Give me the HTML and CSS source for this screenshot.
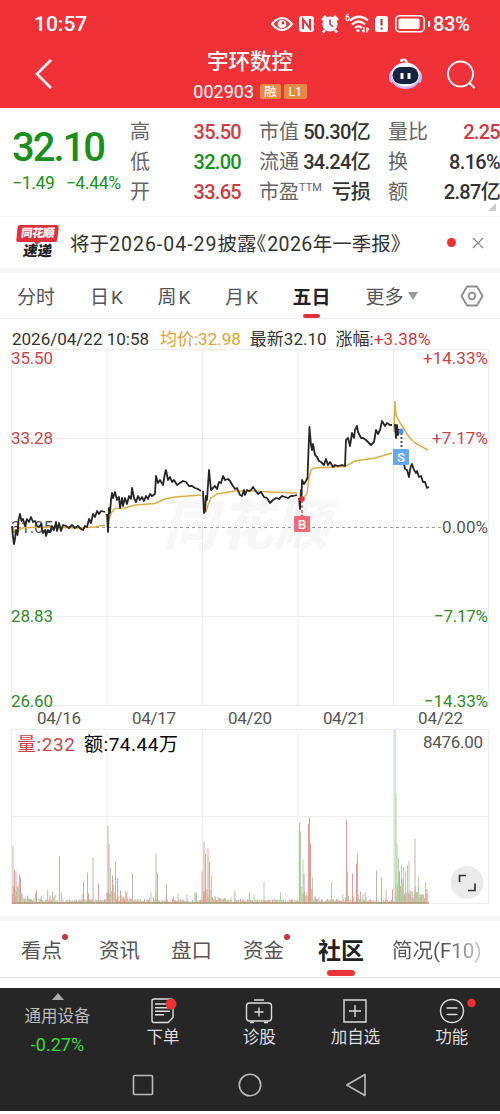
FILE: index.html
```
<!DOCTYPE html>
<html lang="zh-CN">
<head>
  <meta charset="UTF-8">
  <meta name="viewport" content="width=device-width, initial-scale=1.0">
  <title>宇环数控 002903</title>
  <link rel="stylesheet" href="styles.css">
</head>
<body>
  <header class="header">
    <div class="status">
      <span class="time">10:57</span>
      <svg class="status-icons" width="154" height="24" viewBox="0 0 154 24">
        <!-- eye -->
        <path d="M1 12Q11 0 21 12Q11 24 1 12Z" fill="none" stroke="#fff" stroke-width="2"/>
        <circle cx="11" cy="12" r="4.3" fill="#fff"/><circle cx="12" cy="11" r="1.4" fill="#a33"/>
        <!-- nfc -->
        <rect x="28" y="4" width="15" height="16" rx="3" fill="#fff"/>
        <path d="M32 17V7.5L39 16.5V7" fill="none" stroke="#ef3137" stroke-width="2"/>
        <!-- alarm -->
        <circle cx="59" cy="12" r="7.6" fill="#fff"/>
        <path d="M51 8l4-4M67 8l-4-4M54 18l-2 2.500M64 18l2 2.500" stroke="#fff" stroke-width="2.500"/>
        <path d="M59 7.500V12l3 3" fill="none" stroke="#ef3137" stroke-width="1.600"/>
        <!-- wifi -->
        <text x="74" y="9" class="wifi-gen">6</text>
        <path d="M79 8.500Q88 1 97 8.500M81 12.500Q87.500 6.500 94 12.500M84 16Q87.500 12.500 91 16" fill="none" stroke="#fff" stroke-width="2.200"/>
        <circle cx="87" cy="18.500" r="1.600" fill="#fff"/>
        <path d="M93 15v5M91 18l2 2.500M96 20.500v-5M98 18l-2-2.500" fill="none" stroke="#fff" stroke-width="1.300"/>
        <!-- sim -->
        <path d="M106 4h9a2 2 0 0 1 2 2v12a2 2 0 0 1-2 2h-9a2 2 0 0 1-2-2V7z" fill="#fff"/>
        <path d="M110.500 7v6.500M110.500 15.500v2" stroke="#a33" stroke-width="2"/>
        <!-- battery -->
        <rect x="124.800" y="3.800" width="28.400" height="16" rx="4" fill="none" stroke="#fff" stroke-width="1.500"/>
        <rect x="127.500" y="6.500" width="21" height="10.500" rx="1.500" fill="#fff"/>
      </svg>
      <span class="battery-tip"></span>
      <span class="battery">83%</span>
    </div>
    <div class="title-bar">
      <svg class="back" width="20" height="32" viewBox="0 0 20 32"><path d="M18 2L4 16L18 30" fill="none" stroke="#fff" stroke-width="2.500"/></svg>
      <div class="title">
        <h1>宇环数控</h1>
        <div class="code"><span>002903</span><i>融</i><i>L1</i></div>
      </div>
      <svg class="robot" width="36" height="34" viewBox="0 0 36 34">
        <path d="M13 3Q18 1 19 6" fill="none" stroke="#fff" stroke-width="2"/><circle cx="13.500" cy="3.500" r="1.500" fill="#fff"/>
        <ellipse cx="3.500" cy="20" rx="2.500" ry="6" fill="#c9b5f2"/><ellipse cx="31.500" cy="20" rx="2.500" ry="6" fill="#c9b5f2"/>
        <ellipse cx="17.500" cy="19" rx="15" ry="13" fill="#cbb9f7"/>
        <ellipse cx="17.500" cy="17.500" rx="14" ry="12" fill="#f6f4ff"/>
        <rect x="4.500" y="10" width="26" height="17" rx="8.500" fill="#16233f"/>
        <path d="M14 16v6M21 16v6" stroke="#fff" stroke-width="3"/>
      </svg>
      <svg class="search" width="30" height="30" viewBox="0 0 30 30"><circle cx="13.500" cy="14" r="12.500" fill="none" stroke="#fff" stroke-width="1.800"/><path d="M22 22.500L27.500 28" stroke="#fff" stroke-width="2"/></svg>
    </div>
  </header>

  <section class="quote">
    <div class="price green">
      <strong>32.10</strong>
      <div><span>−1.49</span><span>−4.44%</span></div>
    </div>
    <dl class="stats">
      <dt>高</dt><dd class="red">35.50</dd>
      <dt>市值</dt><dd>50.30亿</dd>
      <dt>量比</dt><dd class="red">2.25</dd>
      <dt>低</dt><dd class="green">32.00</dd>
      <dt>流通</dt><dd>34.24亿</dd>
      <dt>换</dt><dd>8.16%</dd>
      <dt>开</dt><dd class="red">33.65</dd>
      <dt>市盈<sup>TTM</sup></dt><dd>亏损</dd>
      <dt>额</dt><dd>2.87亿</dd>
    </dl>
    <span class="corner"></span>
  </section>

  <section class="news">
    <div class="news-logo"><b>同花顺</b><em>速递</em></div>
    <p>将于<span class="date">2026-04-29</span>披露<span class="half">《</span><span class="year">2026</span>年一季报<span class="half">》</span></p>
    <span class="news-dot"></span>
    <svg width="12" height="12" viewBox="0 0 12 12"><path d="M1 1l10 10M11 1L1 11" stroke="#888" stroke-width="1.300"/></svg>
  </section>

  <nav class="periods">
    <a>分时</a><a>日<s>K</s></a><a>周<s>K</s></a><a>月<s>K</s></a><a class="active">五日</a><a>更多<small></small></a>
    <svg width="24" height="22" viewBox="0 0 24 22"><path d="M7 1.500h10L22.500 11L17 20.500H7L1.500 11z" fill="none" stroke="#8a8a8a" stroke-width="1.800" stroke-linejoin="round"/><circle cx="12" cy="11" r="3.300" fill="none" stroke="#8a8a8a" stroke-width="1.800"/></svg>
  </nav>

  <section class="charts">
    <div class="info"><span class="info-time">2026/04/22 10:58</span><span class="gold">均价:32.98</span><span>最新32.10</span><span>涨幅:<b class="red">+3.38%</b></span></div>
    <svg class="chart" width="500" height="568" viewBox="0 348 500 568">
      <text class="watermark" x="163" y="545" textLength="166">同花顺</text>
      <path class="grid" d="M11.500 349.500H488.500V705.500H11.500ZM11.500 438.500H488.500M11.500 616.500H488.500M107 349V705M202.500 349V705M298 349V705M393.500 349V705"/>
      <path class="grid" d="M11.500 729.500H488.500V903.500H11.500ZM11.500 816.500H488.500M107 729V903M202.500 729V903M298 729V903M393.500 729V903"/>
      <path class="zero" d="M12 527.500H441"/>
      <g class="axis">
        <text class="up" x="11" y="364" textLength="42">35.50</text>
        <text class="up" x="11" y="443.500" textLength="42">33.28</text>
        <text x="11" y="533" textLength="42">31.05</text>
        <text class="down" x="11" y="622" textLength="42">28.83</text>
        <text class="down" x="11" y="707" textLength="42">26.60</text>
        <text class="up" x="423" y="364" textLength="65">+14.33%</text>
        <text class="up" x="432" y="443.500" textLength="56">+7.17%</text>
        <text x="442" y="533" textLength="46">0.00%</text>
        <text class="down" x="434" y="622" textLength="54">−7.17%</text>
        <text class="down" x="424" y="707" textLength="64">−14.33%</text>
        <text x="37" y="724" textLength="44">04/16</text>
        <text x="132" y="724" textLength="44">04/17</text>
        <text x="228" y="724" textLength="44">04/20</text>
        <text x="323" y="724" textLength="43">04/21</text>
        <text x="418" y="724" textLength="45">04/22</text>
        <text x="423" y="748" textLength="60">8476.00</text>
      </g>
      <text class="vol-text up" x="17" y="751" textLength="58">量:232</text>
      <text class="vol-text" x="84" y="751" textLength="94">额:74.44万</text>

      <path class="avg" d="M12 527L15 532L22 528L40 527L80 528L95 527L105 525M108 522L112 512L115 508.500L125 508L135 505L155 503.500L165 499L175 497L201 495M203 495L206 512L208 505L211 498L217 494L235 491L250 491L270 492L297 493M302 499L307 494L309 478L311 470L314 468L345 466.500L355 461L375 458L392 453M394 432L395 401L396 415L399 421L404 429L409 437L415 443L428 450"/>
      <path class="line" d="M12 526L13 537L14 544L15 539L16 530L17.500 535L18.500 520L20 514L21.500 521L23 519L25 526L27 519L29 522L31 517L33 522L35 521L37 526L39 527L41 524L43 533L45 530L46 536L48 530L50 532L52 526L54 530L56 522L57 531L59 523L61 531L63 525L66 526L69 528L72 525L75 528L78 526L81 529L83 530L85 526L87 527L89 519L91 523L93 514L95 517L97 511L99 514L101 511L105 512"/>
      <path class="line" d="M107 514L108 532L109 508L110 513L111 500L112 493L113 498L115 492L117 500L119 497L120 508L122 498L123 506L125 498L127 504L129 496L131 499L132 488L134 498L136 502L138 496L140 500L142 497L144 501L146 496L148 499L150 494L152 496L155 494L156 476L158 483L160 480L163 485L165 473L166 470L168 480L170 477L172 482L174 480L177 485L180 483L183 481L186 482L189 486L192 486L195 488L198 489L201 491"/>
      <path class="line" d="M203 491L203.500 502L204 513L205 511L206 496L207 500L209 470L211 490L213 488L215 486L217 489L219 482L221 483L223 476L225 480L228 479L230 481L233 486L235 489L237 488L240 495L242 496L244 490L245 495L247 490L249 491L251 490L253 487L255 490L258 494L261 492L264 497L267 498L270 503L273 500L276 498L279 499L282 496L285 497L288 498L291 496L293 496L297 495"/>
      <path class="line" d="M299 498L300 509L301 490L301.500 497L302 480L304 484L306 481L307.500 478L308.500 450L309.500 427L311 445L312 450L313 444L315 455L317 457L319 461L321 462L324 465L326 459L328 465L330 462L333 467L335 465L338 466L342 465L345 466L346 440L348 438L350 446L352 433L354 438L355 430L357 426L358 432L361 438L363 438L366 440L369 443L371 445L374 442L376 430L378 434L380 430L382 421L385 426L387 423L390 425L392 425"/>
      <path class="line" d="M395 424L396 438L397 425L398 435L399 430L400 433M404 464L405 469L407 470L409 477L410 470L411 466L412 464L414 470L416 473L417 471L419 477L421 476L423 482L425 482L427 488L429 487"/>

      <path d="M401.500 433V449" stroke="#3d4f7c" stroke-width="2" stroke-dasharray="2 2"/>
      <circle cx="401" cy="431" r="2.600" fill="#4c94ef"/>
      <path d="M302 500V514" stroke="#e05058" stroke-width="1.500" stroke-dasharray="3 2"/>
      <circle cx="302" cy="499" r="2.800" fill="#f02c36"/>
      <rect x="393" y="449" width="16" height="16" rx="1" fill="#69a7f4"/>
      <text class="mark" x="401" y="462">S</text>
      <path d="M300 516l2-2 2 2z" fill="#f4606e"/>
      <rect x="294" y="516" width="16" height="16" rx="1" fill="#f4697a"/>
      <text class="mark" x="302" y="529">B</text>

      <g id="volume"></g>
      <circle cx="467" cy="882.500" r="16.500" fill="#ebebeb"/>
      <path d="M459.500 882V875.500H466M475 883.500V890.500H468" fill="none" stroke="#333" stroke-width="1.700"/>
    </svg>
  </section>

  <nav class="tabs">
    <a class="dot">看点</a><a>资讯</a><a>盘口</a><a class="dot">资金</a><a class="active">社区</a><a class="fade">简况(F10)</a>
  </nav>

  <footer class="bottom">
    <div class="actions">
      <div class="sector"><small></small><span>通用设备</span><b>-0.27%</b></div>
      <div class="action">
        <svg width="28" height="28" viewBox="0 0 28 28"><path d="M5 2H22a2 2 0 0 1 2 2V20.500L19 25.500H5a2 2 0 0 1-2-2V4a2 2 0 0 1 2-2Z" fill="none" stroke="#ddd" stroke-width="1.400"/><path d="M6 7H17M6 10.700H21M6 14.200H21M6 17.700H15" stroke="#ddd" stroke-width="1.400"/><circle cx="22" cy="7" r="5.500" fill="#f02f33"/></svg>
        <span>下单</span>
      </div>
      <div class="action">
        <svg width="28" height="28" viewBox="0 0 28 28"><rect x="1.500" y="6" width="25" height="18" rx="3" fill="none" stroke="#ddd" stroke-width="1.400"/><path d="M9 3H19M5 25.500H9M19 25.500H23M14 10.500V19.500M9.500 15H18.500" stroke="#ddd" stroke-width="1.400"/></svg>
        <span>诊股</span>
      </div>
      <div class="action">
        <svg width="28" height="28" viewBox="0 0 28 28"><path d="M3 3H25V25H3ZM14 8V20M8 14H20" fill="none" stroke="#ddd" stroke-width="1.400"/></svg>
        <span>加自选</span>
      </div>
      <div class="action">
        <svg width="50" height="28" viewBox="0 0 50 28"><circle cx="25" cy="14" r="11.500" fill="none" stroke="#ddd" stroke-width="1.400"/><path d="M19.500 11H30.500M19.500 17.500H30.500" stroke="#ddd" stroke-width="1.400"/><circle cx="44.500" cy="6" r="4.200" fill="#f02f33"/></svg>
        <span>功能</span>
      </div>
    </div>
    <div class="system">
      <svg width="22" height="22" viewBox="0 0 22 22"><rect x="1.500" y="1.500" width="19" height="19" rx="1" fill="none" stroke="#bbb" stroke-width="1.600"/></svg>
      <svg width="24" height="24" viewBox="0 0 24 24"><circle cx="12" cy="12" r="10.700" fill="none" stroke="#bbb" stroke-width="1.600"/></svg>
      <svg width="22" height="24" viewBox="0 0 22 24"><path d="M19 1.500V22.500L0.800 12Z" fill="none" stroke="#bbb" stroke-width="1.600" stroke-linejoin="round"/></svg>
    </div>
  </footer>

  <script>
    // x, height of the tall volume bars, colour: r = up, g = down, n = flat
    const peaks = [
      [12.5, 58, 'n'], [14, 34, 'r'], [15.5, 32, 'r'], [19, 29, 'n'], [20, 26, 'r'], [59, 47, 'n'], [87, 31, 'n'], [92.5, 46, 'n'], [98, 20, 'r'], [83, 22, 'r'],
      [107.5, 78, 'n'], [108.5, 60, 'n'], [110, 36, 'g'], [112, 28, 'r'], [115, 42, 'n'], [117, 25, 'r'], [132, 30, 'n'], [155.5, 50, 'n'], [157, 30, 'r'], [166, 20, 'n'],
      [201.5, 32, 'r'], [203.5, 62, 'r'], [205, 50, 'r'], [207.5, 55, 'r'], [209, 42, 'r'], [211, 28, 'g'], [263.5, 22, 'g'],
      [299, 81, 'n'], [300, 72, 'g'], [302.5, 44, 'g'], [303.5, 30, 'r'], [308, 80, 'r'], [309, 86, 'r'], [310, 60, 'r'], [312, 26, 'g'], [331, 22, 'g'],
      [346, 84, 'r'], [347, 32, 'g'], [352, 30, 'r'], [356, 40, 'r'], [357, 50, 'n'], [376, 33, 'n'], [381, 26, 'r'],
      [394.5, 174, 'g'], [395.5, 110, 'g'], [396.5, 60, 'g'], [398, 46, 'g'], [399, 32, 'r'], [401, 38, 'g'], [403, 36, 'g'], [405, 32, 'g'], [407, 38, 'g'], [408.5, 43, 'g'], [414.5, 65, 'n'], [418, 26, 'g'], [425, 22, 'g']
    ];
    const colors = { r: '#dd8f87', g: '#a6cb95', n: '#b9a795' };
    const starts = [12, 107, 203, 299, 395];

    let seed = 7;
    function random() {
      seed = (seed * 16807) % 2147483647;
      return seed / 2147483647;
    }

    function bar(x, h, color) {
      return `<rect x="${x.toFixed(1)}" y="${(903.5 - h).toFixed(1)}" width="1" height="${h.toFixed(1)}" fill="${color}"/>`;
    }

    let bars = '';
    for (let x = 12; x < 428; x += 0.8) {
      const day = starts.filter(s => s <= x).pop();
      const base = 3 + 13 * Math.exp(-(x - day) / 9) + (day === 395 ? 5 : 0);
      const h = base * (0.4 + random()) + (random() > 0.87 ? random() * 10 : 0);
      const kind = random();
      bars += bar(x, h, kind < 0.36 ? colors.r : kind < 0.76 ? colors.g : colors.n);
    }
    for (const [x, h, c] of peaks) {
      bars += bar(x, h, colors[c]);
    }
    document.getElementById('volume').innerHTML = bars + '<path d="M12 903H429" stroke="#a58f6c" stroke-width="1.500"/>';
  </script>
</body>
</html>
```
FILE: styles.css
```
* {
  box-sizing: border-box;
}
body {
  margin: 0;
  width: 500px;
  height: 1114px;
  overflow: hidden;
  font-family: Roboto, "Noto Sans CJK SC", sans-serif;
  background: #fff;
  color: #333;
}
h1, p, dl, dd {
  margin: 0;
}
i, em {
  font-style: normal;
}
svg {
  display: block;
  flex: none;
}
.red {
  color: #d03a42;
}
.green {
  color: #18901c;
}
.gold {
  color: #dca437;
}

/* header */
.header {
  height: 108px;
  background: #f03137;
  color: #fff;
}
.status {
  display: flex;
  align-items: center;
  height: 48px;
  padding-left: 34px;
  font-size: 21px;
  font-weight: 500;
}
.time {
  width: 237px;
}
.battery-tip {
  width: 2px;
  height: 6px;
  margin: 0 3px 0 3px;
  background: #fff;
}
.battery {
  font-size: 20px;
  letter-spacing: -0.3px;
}
.wifi-gen {
  font-size: 9px;
  fill: #fff;
}
.title-bar {
  display: flex;
  height: 60px;
}
.back {
  margin: 10px 0 0 33px;
}
.title {
  width: 194px;
  margin-left: 100px;
  text-align: center;
}
.title h1 {
  padding-top: 1px;
  font-size: 21.5px;
  font-weight: 500;
  line-height: 26px;
}
.code {
  display: flex;
  justify-content: center;
  align-items: center;
  height: 20px;
  margin-top: 6px;
  font-size: 18px;
}
.code span {
  margin-right: 6px;
}
.code i {
  height: 15px;
  margin-right: 3px;
  padding: 0 4px;
  border-radius: 2px;
  background: #e58a45;
  font-size: 12.5px;
  line-height: 15px;
}
.code i:last-child {
  margin-right: 0;
  padding: 0 5px;
  letter-spacing: -0.3px;
}
.robot {
  margin: 9px 0 0 41px;
}
.search {
  margin: 12px 0 0 23px;
}

/* quote */
.quote {
  position: relative;
  display: flex;
  height: 109px;
  border-bottom: 1px solid #f3f3f3;
}
.price {
  width: 130px;
  padding: 16px 0 0 12px;
}
.price strong {
  display: block;
  font-size: 40px;
  font-weight: 500;
  line-height: 48px;
  letter-spacing: -2px;
}
.price div {
  display: flex;
  gap: 11px;
  font-size: 17.5px;
  line-height: 23px;
  letter-spacing: -0.3px;
}
.stats {
  display: grid;
  grid-template-columns: 39px 72px 63px 66px 58px 72px;
  grid-template-rows: repeat(3, 30px);
  padding-top: 9px;
  font-size: 20px;
  line-height: 30px;
}
.stats dt {
  white-space: nowrap;
  color: #666;
}
.stats dt:nth-of-type(3n+2),
.stats dt:nth-of-type(3n) {
  padding-left: 18px;
}
.stats dd {
  display: flex;
  justify-content: flex-end;
  white-space: nowrap;
  font-weight: 500;
  letter-spacing: -0.7px;
}
.stats sup {
  font-size: 11px;
  line-height: 0;
}
.corner {
  position: absolute;
  right: 4px;
  bottom: 5px;
  border-left: 8px solid transparent;
  border-bottom: 8px solid #ccc;
}

/* news */
.news {
  display: flex;
  align-items: center;
  height: 56px;
  padding: 0 16px 0 17px;
  border-bottom: 5px solid #f5f5f5;
}
.news-logo {
  width: 41px;
  height: 36px;
  margin-right: 12px;
  text-align: center;
}
.news-logo b {
  position: relative;
  display: block;
  height: 17px;
  border-radius: 2px;
  background: #e12f3b;
  color: #fff;
  font-size: 11.5px;
  font-weight: 900;
  line-height: 16px;
  letter-spacing: -0.5px;
  transform: skewX(-6deg);
}
.news-logo b::after {
  content: "";
  position: absolute;
  left: 18px;
  top: 17px;
  border: 3px solid transparent;
  border-top-color: #e12f3b;
  border-bottom: 0;
}
.news-logo em {
  display: block;
  color: #222;
  font-size: 14.5px;
  font-weight: 900;
  line-height: 20px;
  transform: skewX(-8deg);
}
.news p {
  width: 377px;
  white-space: nowrap;
  font-size: 19.5px;
}
.news .date {
  letter-spacing: 1px;
}
.news .year {
  margin-left: 1px;
  letter-spacing: 0.4px;
}
.half {
  font-feature-settings: "halt";
}
.news-dot {
  width: 9px;
  height: 9px;
  margin-right: 16px;
  border-radius: 50%;
  background: #ee2f33;
  flex: none;
}

/* periods */
.periods {
  display: flex;
  align-items: center;
  height: 46px;
  padding-left: 17px;
  border-bottom: 1px solid #f1f1f1;
  color: #555;
  font-size: 19px;
}
.periods a {
  position: relative;
  width: 67.5px;
  white-space: nowrap;
}
.periods a:first-child {
  width: 73px;
}
.periods s {
  margin-left: 2px;
  text-decoration: none;
}
.periods .active {
  width: 73px;
  color: #222;
  font-weight: 700;
}
.periods .active::after {
  content: "";
  position: absolute;
  left: 10px;
  bottom: -9px;
  width: 17px;
  height: 4px;
  border-radius: 2px;
  background: #e0303a;
}
.periods small {
  display: inline-block;
  margin: 0 0 4px 4px;
  border: 5px solid transparent;
  border-top: 8px solid #999;
  border-bottom: 0;
}
.periods svg {
  margin-left: 27px;
}

/* charts */
.charts {
  height: 597px;
}
.info {
  display: flex;
  align-items: center;
  height: 29px;
  padding: 11px 0 0 12px;
  white-space: nowrap;
  font-size: 17px;
  line-height: 18px;
}
.info span {
  margin-right: 9px;
}
.info .info-time {
  width: 139px;
}
.info b {
  font-weight: 400;
  letter-spacing: 0.3px;
}
.chart {
  font-size: 17px;
}
.chart .grid {
  fill: none;
  stroke: #ececec;
}
.chart .zero {
  stroke: #999;
  stroke-dasharray: 3 3;
}
.chart .watermark {
  fill: #f7f7f7;
  font-size: 54px;
  font-weight: 900;
  font-style: italic;
}
.axis {
  fill: #555;
}
.chart .up {
  fill: #c9444a;
}
.chart .down {
  fill: #318c2b;
}
.chart .vol-text {
  font-size: 19px;
}
.chart .line {
  fill: none;
  stroke: #262626;
  stroke-width: 1.8;
  stroke-linejoin: round;
}
.chart .avg {
  fill: none;
  stroke: #dcae45;
  stroke-width: 1.5;
}
.chart .mark {
  fill: #fff;
  font-size: 13px;
  font-weight: 500;
  text-anchor: middle;
}
#volume {
  opacity: 0.85;
}

/* tabs */
.tabs {
  display: flex;
  align-items: center;
  height: 62px;
  padding-left: 21px;
  border-top: 5px solid #f5f5f5;
  border-bottom: 1px solid #e6e6e6;
  color: #555;
  font-size: 20.5px;
}
.tabs a {
  position: relative;
  flex: none;
  margin-right: 31px;
  white-space: nowrap;
}
.tabs a:first-child {
  margin-right: 37px;
}
.tabs a:nth-child(4) {
  margin-right: 34px;
}
.tabs .active {
  margin-right: 28px;
  color: #222;
  font-size: 23px;
  font-weight: 700;
}
.tabs .dot::after {
  content: "";
  position: absolute;
  right: -6px;
  top: 0;
  width: 6px;
  height: 6px;
  border-radius: 50%;
  background: #c8323c;
}
.tabs .active::after {
  content: "";
  position: absolute;
  left: 9px;
  bottom: -10px;
  width: 28px;
  height: 6px;
  border-radius: 3px;
  background: #ee3338;
}
.tabs .fade {
  margin: 0;
  background: linear-gradient(90deg, #555 60%, #ccc);
  background-clip: text;
  -webkit-background-clip: text;
  color: transparent;
}

/* bottom */
.bottom {
  height: 123px;
  margin-top: 10px;
  background: #262626;
  color: #ddd;
}
.actions {
  display: flex;
  height: 74px;
  font-size: 16.5px;
}
.sector {
  display: flex;
  flex-direction: column;
  align-items: center;
  width: 115px;
  color: #bbb;
}
.sector small {
  margin-top: 5px;
  border: 6px solid transparent;
  border-top: 0;
  border-bottom: 7px solid #aaa;
}
.sector span {
  margin-top: 5px;
  line-height: 24px;
}
.sector b {
  margin-top: 6px;
  color: #38dd3c;
  font-size: 18px;
  font-weight: 400;
  line-height: 20px;
}
.action {
  display: flex;
  flex-direction: column;
  align-items: center;
  width: 96.2px;
  padding-top: 9px;
}
.action span {
  margin-top: 1px;
  line-height: 24px;
}
.system {
  display: flex;
  justify-content: center;
  align-items: center;
  gap: 84px;
  height: 46px;
}
```
